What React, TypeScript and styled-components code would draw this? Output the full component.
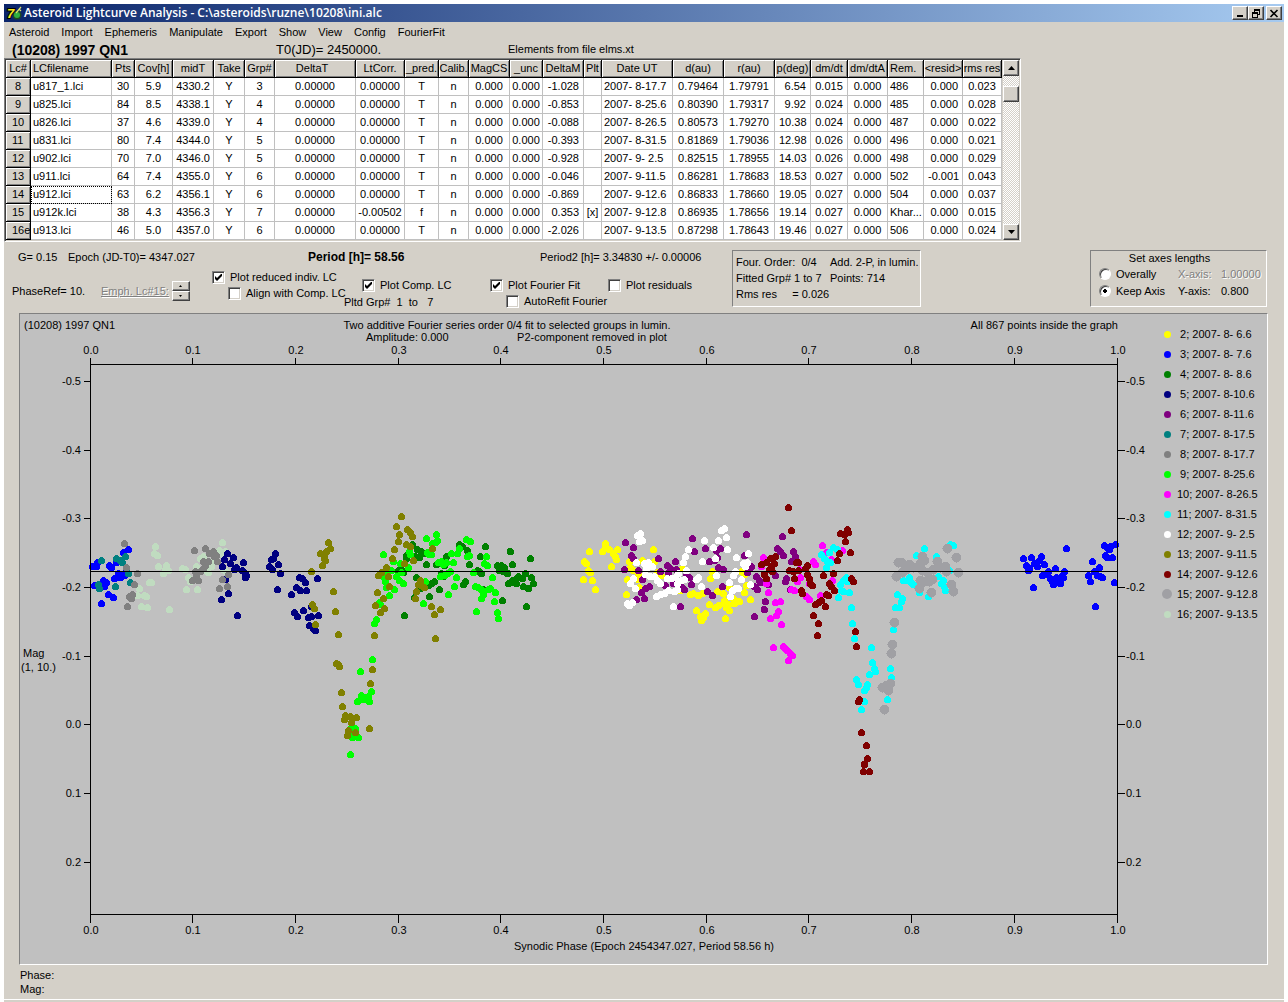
import React, { useState } from "react";
import styled, { createGlobalStyle, css } from "styled-components";

const face = "#d4d0c8";
const uiFont = '"Liberation Sans", Arial, sans-serif';

const GlobalStyle = createGlobalStyle`
  * { box-sizing: border-box; }
  body {
    margin: 0;
    background: #ffffff;
    color: #000000;
    font: 11px/14px ${uiFont};
  }
  button, input { font: inherit; color: inherit; margin: 0; }
`;

const raised = css`
  background: ${face};
  border: 1px solid;
  border-color: #ffffff #404040 #404040 #ffffff;
  box-shadow: inset -1px -1px #808080;
`;

const Window = styled.main`
  margin: 4px 4px 0;
  background: ${face};
`;

const TitleBar = styled.header`
  display: flex;
  align-items: center;
  gap: 2px;
  height: 18px;
  padding: 0 2px;
  background: linear-gradient(to right, #0a246a, #a6caf0);
`;

const Title = styled.h1`
  flex: 1;
  margin: 0;
  color: #ffffff;
  font: 600 12px/18px "Open Sans", "Noto Sans", sans-serif;
  white-space: nowrap;
`;

const Captions = styled.div`
  display: flex;
`;

const CaptionButton = styled.button<{ $apart?: boolean }>`
  ${raised}
  display: grid;
  place-items: center;
  width: 16px;
  height: 14px;
  margin-left: ${(p) => (p.$apart ? 2 : 0)}px;
  padding: 0;
`;

const Menu = styled.nav`
  display: flex;
  gap: 12px;
  height: 20px;
  padding: 0 5px;
`;

const MenuItem = styled.button`
  padding: 0;
  border: 0;
  background: none;
  line-height: 20px;
`;

const InfoRow = styled.div`
  display: grid;
  grid-template-columns: 264px 232px 1fr;
  padding-left: 8px;
  font-size: 13px;
  line-height: 16px;
`;

const Target = styled.strong`
  font-size: 14px;
`;

const Small = styled.span`
  font-size: 11px;
  line-height: 14px;
`;

const GridFrame = styled.section`
  display: flex;
  width: fit-content;
  padding: 1px;
  border: 1px solid;
  border-color: #808080 #ffffff #ffffff #808080;
  box-shadow: inset 1px 1px #404040;
`;

const Table = styled.table`
  width: 996px;
  table-layout: fixed;
  border-collapse: separate;
  border-spacing: 0;
  background: #ffffff;
`;

type Align = "left" | "center" | "right";

const HeadCell = styled.th<{ $align?: Align }>`
  height: 18px;
  padding: 0 0 0 ${(p) => (p.$align === "left" ? 2 : 0)}px;
  overflow: hidden;
  background: ${face};
  border-right: 1px solid #000000;
  border-bottom: 1px solid #000000;
  box-shadow: inset 1px 1px #ffffff, inset -1px -1px #808080;
  font-weight: normal;
  line-height: 17px;
  text-align: ${(p) => p.$align ?? "center"};
  white-space: pre;
  text-overflow: clip;
`;

const RowHead = styled(HeadCell)`
  padding: 0 0 0 6px;
`;

const Cell = styled.td<{ $align: Align; $focus: boolean }>`
  height: 18px;
  padding: 0 ${(p) => (p.$align === "right" ? 4 : 2)}px;
  overflow: hidden;
  border-right: 1px solid #c0c0c0;
  border-bottom: 1px solid #c0c0c0;
  outline: ${(p) => (p.$focus ? "1px dotted #000000" : "none")};
  outline-offset: -1px;
  line-height: 17px;
  text-align: ${(p) => p.$align};
  white-space: pre;
`;

const ScrollBar = styled.div`
  display: flex;
  flex-direction: column;
  width: 16px;
  margin-left: 1px;
  background: repeating-conic-gradient(#ffffff 0 25%, ${face} 0 50%) 0 0 / 2px 2px;
`;

const ScrollButton = styled.button`
  ${raised}
  display: grid;
  place-items: center;
  width: 16px;
  height: 16px;
  padding: 0;
`;

const ScrollThumb = styled.div`
  ${raised}
  height: 16px;
  margin: 10px 0 auto;
`;

const Controls = styled.section`
  display: flex;
  align-items: flex-start;
  padding: 8px 17px 0 0;
`;

const Settings = styled.div`
  flex: 0 0 728px;
`;

const Values = styled.div`
  display: grid;
  grid-template-columns: 50px 240px 232px 1fr;
  padding-left: 14px;
`;

const Period = styled.strong`
  font-size: 12px;
`;

const Options = styled.div`
  display: grid;
  grid-template-columns: 208px 132px 146px 118px 1fr;
  padding-top: 5px;
`;

const Group = styled.div<{ $low?: boolean }>`
  padding-top: ${(p) => (p.$low ? 8 : 0)}px;
`;

const PhaseGroup = styled.div`
  display: flex;
  align-items: center;
  gap: 3px;
  padding-left: 8px;
  height: 44px;
`;

const PhaseRef = styled.span`
  width: 86px;
`;

const Emphasis = styled.span`
  color: #808080;
  text-decoration: underline;
  text-shadow: 1px 1px #ffffff;
`;

const Spinner = styled.span`
  display: flex;
  flex-direction: column;
`;

const SpinButton = styled.button`
  ${raised}
  display: grid;
  place-items: center;
  width: 18px;
  height: 10px;
  padding: 0;
`;

const Check = styled.label<{ $indent?: number }>`
  display: flex;
  align-items: center;
  gap: 5px;
  height: 16px;
  padding-left: ${(p) => p.$indent ?? 0}px;
  white-space: nowrap;
`;

const Box = styled.input`
  appearance: none;
  flex: none;
  width: 13px;
  height: 13px;
  border: 1px solid;
  border-color: #808080 #ffffff #ffffff #808080;
  box-shadow: inset 1px 1px #404040, inset -1px -1px ${face};
  background: #ffffff;

  &:checked {
    background: #ffffff
      url("data:image/svg+xml,%3Csvg xmlns='http://www.w3.org/2000/svg' width='7' height='7'%3E%3Cpath d='M0 2v3l2 2 5-5V-1L2 4z'/%3E%3C/svg%3E")
      center / 7px 7px no-repeat;
  }
`;

const Radio = styled.input`
  appearance: none;
  flex: none;
  width: 12px;
  height: 12px;
  border: 1px solid;
  border-color: #808080 #ffffff #ffffff #808080;
  border-radius: 50%;
  box-shadow: inset 1px 1px #404040;
  background: #ffffff;

  &:checked {
    background: radial-gradient(circle, #000000 2px, #ffffff 2px);
  }
`;

const Spaced = styled.div`
  line-height: 18px;
  white-space: pre;
`;

const Sunken = styled.section`
  height: 57px;
  border: 1px solid;
  border-color: #808080 #ffffff #ffffff #808080;
  white-space: pre;
`;

const FitBox = styled(Sunken)`
  display: grid;
  grid-template-columns: 94px 1fr;
  align-content: start;
  flex: 0 0 189px;
  padding: 3px 0 0 3px;
  line-height: 16px;
`;

const AxesBox = styled(Sunken)`
  flex: 0 0 177px;
  margin-left: auto;
`;

const AxesTitle = styled.h2`
  margin: 0;
  padding-right: 18px;
  font-size: 11px;
  font-weight: normal;
  line-height: 15px;
  text-align: center;
`;

const AxisRow = styled.div`
  display: grid;
  grid-template-columns: 79px 43px 1fr;
  padding-left: 8px;
  line-height: 17px;
`;

const AxisValue = styled.span<{ $off?: boolean }>`
  color: ${(p) => (p.$off ? "#808080" : "#000000")};
  text-shadow: ${(p) => (p.$off ? "1px 1px #ffffff" : "none")};
`;

const Panel = styled.section`
  display: flex;
  margin: 0 16px 0 15px;
  border: 1px solid;
  border-color: #808080 #ffffff #ffffff #808080;
  background: #c0c0c0;
`;

const Chart = styled.svg`
  display: block;
  flex: 1;
  min-width: 0;
  height: auto;
  font: 11px ${uiFont};
`;

const Legend = styled.ul`
  flex: 0 0 115px;
  margin: 0;
  padding: 10px 0 0 10px;
  list-style: none;
`;

const LegendItem = styled.li`
  display: flex;
  align-items: center;
  height: 20px;
  white-space: pre;
`;

const Swatch = styled.span<{ $color: string; $big?: boolean }>`
  flex: none;
  width: ${(p) => (p.$big ? 10 : 7)}px;
  height: ${(p) => (p.$big ? 10 : 7)}px;
  margin: 0 ${(p) => (p.$big ? 5 : 6)}px 0 ${(p) => (p.$big ? 0 : 2)}px;
  border-radius: 50%;
  background: ${(p) => p.$color};
`;

const Status = styled.footer`
  padding: 3px 16px;
`;

const Edge = styled.div`
  height: 3px;
  margin: 0 4px;
  border-top: 1px solid #ffffff;
  background: ${face};
`;

const menu = ["Asteroid", "Import", "Ephemeris", "Manipulate", "Export", "Show", "View", "Config", "FourierFit"];

const columns: { name: string; width: number; head?: Align; align?: Align }[] = [
  { name: "Lc#", width: 25 },
  { name: "LCfilename", width: 81, head: "left", align: "left" },
  { name: "Pts", width: 23 },
  { name: "Cov[h]", width: 38 },
  { name: "midT", width: 41 },
  { name: "Take", width: 31 },
  { name: "Grp#", width: 30 },
  { name: "DeltaT  ", width: 81 },
  { name: "LtCorr.", width: 49 },
  { name: "_pred.", width: 34 },
  { name: "Calib.", width: 30 },
  { name: "MagCS", width: 41 },
  { name: "_unc", width: 33 },
  { name: "DeltaM", width: 41, align: "right" },
  { name: "Plt", width: 18 },
  { name: "Date UT", width: 71, align: "left" },
  { name: "d(au)", width: 51 },
  { name: "r(au)", width: 51 },
  { name: "p(deg)", width: 36, align: "right" },
  { name: "dm/dt", width: 37 },
  { name: "dm/dtA", width: 40 },
  { name: "Rem.", width: 36, head: "left", align: "left" },
  { name: "<resid>", width: 39, align: "right" },
  { name: "rms res", width: 39 },
];

const rows = [
  " 8|u817_1.lci|30|5.9|4330.2|Y|3|0.00000|0.00000|T|n|0.000|0.000|-1.028||2007- 8-17.7|0.79464|1.79791|6.54|0.015|0.000|486|0.000|0.023",
  " 9|u825.lci|84|8.5|4338.1|Y|4|0.00000|0.00000|T|n|0.000|0.000|-0.853||2007- 8-25.6|0.80390|1.79317|9.92|0.024|0.000|485|0.000|0.028",
  "10|u826.lci|37|4.6|4339.0|Y|4|0.00000|0.00000|T|n|0.000|0.000|-0.088||2007- 8-26.5|0.80573|1.79270|10.38|0.024|0.000|487|0.000|0.022",
  "11|u831.lci|80|7.4|4344.0|Y|5|0.00000|0.00000|T|n|0.000|0.000|-0.393||2007- 8-31.5|0.81869|1.79036|12.98|0.026|0.000|496|0.000|0.021",
  "12|u902.lci|70|7.0|4346.0|Y|5|0.00000|0.00000|T|n|0.000|0.000|-0.928||2007- 9- 2.5|0.82515|1.78955|14.03|0.026|0.000|498|0.000|0.029",
  "13|u911.lci|64|7.4|4355.0|Y|6|0.00000|0.00000|T|n|0.000|0.000|-0.046||2007- 9-11.5|0.86281|1.78683|18.53|0.027|0.000|502|-0.001|0.043",
  "14|u912.lci|63|6.2|4356.1|Y|6|0.00000|0.00000|T|n|0.000|0.000|-0.869||2007- 9-12.6|0.86833|1.78660|19.05|0.027|0.000|504|0.000|0.037",
  "15|u912k.lci|38|4.3|4356.3|Y|7|0.00000|-0.00502|f|n|0.000|0.000|0.353|[x]|2007- 9-12.8|0.86935|1.78656|19.14|0.027|0.000|Khar...|0.000|0.015",
  "16e|u913.lci|46|5.0|4357.0|Y|6|0.00000|0.00000|T|n|0.000|0.000|-2.026||2007- 9-13.5|0.87298|1.78643|19.46|0.027|0.000|506|0.000|0.024",
].map((line) => line.split("|"));

type Series = { id: number; date: string; color: string; big?: boolean; points: string };

const series: Series[] = [
  {
    id: 2, date: "2007- 8- 6.6", color: "#ffff00",
    points:
      "589,551 584,561 586,563 588,570 590,572 583,579 592,580 595,589 605,543 605,547 602,551 609,549 617,549 613,553 615,556 616,559 611,566 653,549 629,561 642,560 654,561 630,567 633,570 638,573 627,579 638,579 639,587 626,594 657,572 661,575 682,568 680,590 690,594 693,593 698,595 702,593 710,578 712,571 717,591 723,593 696,610 705,613 700,616 703,617 701,620 709,604 715,607 718,605 723,603 724,600 726,607 729,610 728,604 725,618 734,603 737,601 739,601 733,598 750,599 744,592 746,585 744,574 741,571 729,587 683,562",
  },
  {
    id: 3, date: "2007- 8- 7.6", color: "#0000ff",
    points:
      "92,566 97,562 96,566 94,585 101,603 103,580 106,582 104,586 108,594 113,597 109,565 111,567 116,562 114,578 118,573 120,577 123,552 128,549 124,575 101,583 125,572 1023,558 1026,565 1028,570 1029,568 1031,557 1034,563 1037,566 1039,560 1041,556 1044,564 1033,587 1066,548 1042,575 1045,574 1048,571 1050,578 1053,584 1052,581 1055,568 1056,577 1058,580 1060,583 1061,578 1063,577 1064,571 1062,575 1088,575 1090,581 1092,561 1094,571 1097,575 1099,567 1102,577 1100,576 1095,606 1104,545 1105,555 1109,549 1107,557 1112,557 1110,546 1115,544 1114,582 1107,547",
  },
  {
    id: 4, date: "2007- 8- 8.6", color: "#008000",
    points:
      "412,544 417,549 421,551 424,553 419,557 406,555 406,558 415,556 426,564 436,564 438,563 446,556 459,544 462,546 467,550 469,564 485,546 480,556 510,551 530,558 512,564 497,565 501,565 504,567 499,570 503,571 507,573 502,568 477,570 481,573 479,571 525,573 518,576 522,578 515,579 512,580 508,583 516,583 513,582 531,577 533,583 523,586 528,588 526,606 502,600 483,589 465,581 463,584 434,581 431,583 428,585 439,589 429,596 416,577 420,588 414,597 404,615 398,570 401,569 403,572 441,573 443,576 444,565",
  },
  {
    id: 5, date: "2007- 8-10.6", color: "#000080",
    points:
      "227,553 224,559 222,566 233,557 230,563 243,562 234,569 236,567 242,570 245,573 246,575 245,577 225,579 228,593 221,599 237,615 275,553 273,558 271,559 278,564 269,566 272,569 280,573 277,589 291,594 296,587 300,590 306,590 305,582 299,577 302,578 317,578 294,612 297,616 303,610 308,617 311,616 318,615 309,625 315,630 313,628 311,606",
  },
  {
    id: 6, date: "2007- 8-11.6", color: "#800080",
    points:
      "625,542 633,547 631,555 633,558 624,569 638,570 658,558 642,579 649,586 645,588 641,592 636,599 644,598 667,565 675,561 670,568 676,569 668,572 660,571 673,583 665,585 680,606 692,538 694,551 705,548 720,548 716,550 709,561 717,557 714,560 718,567 723,569 722,586 686,575 689,577 691,584 681,586 684,589 707,591 712,595 746,534 744,555 751,566 749,568 747,572 756,576 759,580 760,582 754,586 757,589 765,601 764,609 754,616 782,536 777,548 780,551 783,555 793,551 795,556 791,561 775,575 786,578 785,581 768,584 790,589",
  },
  {
    id: 7, date: "2007- 8-17.5", color: "#008080",
    points: "101,560 116,558 125,556 122,562 120,560 128,573 130,582 115,586 98,584 99,588",
  },
  {
    id: 8, date: "2007- 8-17.7", color: "#808080",
    points:
      "124,543 126,567 137,573 134,584 127,606 132,594 129,596 131,598 194,550 205,548 213,551 209,553 216,555 217,561 203,561 208,561 205,565 203,568 200,571 195,571 192,580 198,580 196,576 228,574 222,579 227,586 219,588 214,556",
  },
  {
    id: 9, date: "2007- 8-25.6", color: "#00ff00",
    points:
      "383,554 426,538 436,534 437,540 432,543 435,542 409,551 410,554 429,554 427,552 431,554 451,553 457,553 459,548 466,539 470,541 467,556 469,555 486,556 484,563 487,565 453,562 393,561 400,563 408,567 391,570 387,574 384,577 385,581 386,587 394,589 389,595 396,576 399,580 403,583 401,572 438,562 441,561 443,564 446,562 440,576 444,575 447,573 450,571 456,577 454,586 448,594 473,572 475,586 478,587 481,589 483,594 481,598 492,577 490,588 488,589 495,592 494,601 476,611 497,612 498,618 425,581 423,603 379,602 380,604 376,619 374,623 372,659 360,671 371,691 361,695 364,697 368,696 357,701 363,699 369,701 366,699 350,754 355,728 350,728 352,737 358,737 354,733",
  },
  {
    id: 10, date: "2007- 8-26.5", color: "#ff00ff",
    points:
      "763,557 761,566 766,583 768,592 775,602 780,601 778,611 776,615 770,618 781,624 773,647 783,646 785,648 787,650 790,653 792,655 788,660 822,545 826,552 842,550 813,561 815,564 831,559 800,577 797,581 791,589 794,590 799,569 809,583 806,596 809,599 820,595 832,580 828,595",
  },
  {
    id: 11, date: "2007- 8-31.5", color: "#00ffff",
    points:
      "833,547 837,549 829,552 821,554 824,558 827,561 830,562 826,567 846,577 843,580 840,584 847,581 841,590 843,591 849,592 838,597 851,607 852,623 854,638 871,647 872,662 874,668 875,671 869,674 856,679 858,684 867,684 866,687 864,690 864,701 861,709 887,699 891,677 890,668 893,629 895,607 899,607 902,598 901,601 897,594 903,580 907,580 911,582 913,584 909,577 916,555 924,548 936,556 950,544 953,545 928,596 919,592 941,583 944,586 945,590 943,580 938,576 949,570",
  },
  {
    id: 12, date: "2007- 9- 2.5", color: "#ffffff",
    points:
      "640,533 637,535 639,541 642,540 636,562 644,563 648,562 652,566 646,568 645,574 650,576 654,576 657,580 660,583 633,578 630,583 635,588 627,603 632,602 629,605 656,596 660,594 664,593 668,590 674,591 677,589 667,578 671,578 675,577 678,573 681,580 677,583 684,579 686,570 683,562 685,556 688,549 673,606 698,577 696,579 701,586 702,561 704,540 713,547 715,558 718,540 721,530 724,528 726,537 727,549 716,575 729,582 732,590 730,596 738,588 735,588 733,575 735,571 741,579 750,584 736,557 743,563 747,562 748,553 745,566",
  },
  {
    id: 13, date: "2007- 9-11.5", color: "#808000",
    points:
      "328,542 330,548 320,553 324,554 326,551 325,560 322,565 324,558 311,571 333,591 312,604 314,608 315,624 335,611 338,634 336,663 339,666 338,664 341,692 342,706 345,715 344,719 350,716 356,717 351,722 348,730 347,735 355,732 369,728 370,683 372,669 374,635 380,612 384,608 375,605 383,598 377,592 389,586 388,576 378,575 381,572 386,567 392,558 394,549 398,541 399,534 396,526 401,516 407,529 410,532 412,536 406,544 410,546 413,560 404,563 432,548 420,580 418,584 424,587 421,585 416,591 415,598 431,606 440,609 434,614 435,638",
  },
  {
    id: 14, date: "2007- 9-12.6", color: "#800000",
    points:
      "788,507 791,530 775,556 770,558 766,562 761,564 774,563 771,566 769,569 772,571 764,574 766,578 798,562 796,562 807,565 805,568 789,570 793,571 798,570 794,578 807,574 809,578 810,583 812,585 801,590 802,593 823,575 833,573 829,583 831,586 834,590 826,594 828,595 821,600 815,604 818,602 825,606 813,615 818,623 817,635 847,529 840,533 848,532 844,534 845,541 850,552 839,553 837,560 851,578 853,581 855,631 856,646 859,699 858,701 861,732 866,745 867,758 864,764 863,771 869,771",
  },
  {
    id: 15, date: "2007- 9-12.8", color: "#a0a0a4", big: true,
    points:
      "947,548 956,557 958,572 951,584 953,591 931,592 919,588 896,576 898,562 901,562 909,564 906,569 913,567 922,556 924,560 920,563 937,561 940,567 945,566 946,571 933,569 927,572 922,570 920,580 924,581 929,581 932,579 894,622 892,644 891,653 890,683 886,685 882,687 888,690 884,709 902,572",
  },
  {
    id: 16, date: "2007- 9-13.5", color: "#c0dcc0",
    points:
      "155,546 154,553 157,555 158,566 166,565 168,570 163,573 165,569 151,582 149,582 139,588 137,595 144,595 146,596 141,606 147,607 169,609 182,568 185,569 188,577 190,581 186,589 197,589 200,558 203,556 196,566 208,572 211,566 212,562 222,542 219,550 225,551 223,554 223,569 226,571 206,570",
  },
];

/* The last night is plotted beneath the others. */
const plotOrder = [...series.slice(-1), ...series.slice(0, -1)];

const phaseTicks = Array.from({ length: 11 }, (_, i) => ({ x: Math.floor(90 + i * 102.7), label: (i / 10).toFixed(1) }));
const magTicks = [-0.5, -0.4, -0.3, -0.2, -0.1, 0, 0.1, 0.2].map((m) => ({
  y: Math.round(724.4 + m * 687),
  label: m.toFixed(1),
}));

function LightCurve() {
  return (
    <Chart viewBox="20 314 1132 650" role="img" aria-label="Composite lightcurve">
      <g shapeRendering="crispEdges" transform="translate(0.5 0.5)">
        {plotOrder.map((s) => (
          <g key={s.id} fill={s.color}>
            {s.points.split(" ").map((p, i) => {
              const [x, y] = p.split(",");
              return <circle key={i} cx={x} cy={y} r={s.big ? 5 : 3.5} />;
            })}
          </g>
        ))}
        <g stroke="#000000" fill="none">
          <path d="M90 571H1117M90 364H1117V914H90Z" />
          {phaseTicks.map((t) => (
            <path key={t.label} d={`M${t.x} 357V364M${t.x} 914V922`} />
          ))}
          {magTicks.map((t) => (
            <path key={t.label} d={`M83 ${t.y}H90M1117 ${t.y}H1124`} />
          ))}
        </g>
      </g>
      {phaseTicks.map((t) => (
        <g key={t.label} textAnchor="middle">
          <text x={t.x + 1} y={354}>{t.label}</text>
          <text x={t.x + 1} y={934}>{t.label}</text>
        </g>
      ))}
      {magTicks.map((t) => (
        <g key={t.label}>
          <text x={81} y={t.y + 4} textAnchor="end">{t.label}</text>
          <text x={1126} y={t.y + 4}>{t.label}</text>
        </g>
      ))}
      <text x={24} y={329}>(10208) 1997 QN1</text>
      <text x={507} y={329} textAnchor="middle">Two additive Fourier series order 0/4 fit to selected groups in lumin.</text>
      <text x={366} y={341}>Amplitude: 0.000</text>
      <text x={592} y={341} textAnchor="middle">P2-component removed in plot</text>
      <text x={1118} y={329} textAnchor="end">All 867 points inside the graph</text>
      <text x={23} y={657}>Mag</text>
      <text x={21} y={671}>(1, 10.)</text>
      <text x={644} y={950} textAnchor="middle">Synodic Phase (Epoch 2454347.027, Period 58.56 h)</text>
    </Chart>
  );
}

function AppIcon() {
  return (
    <svg width="16" height="16" viewBox="0 0 16 16" aria-hidden="true">
      <circle cx="11" cy="10" r="4.5" fill="#204820" />
      <circle cx="11" cy="10" r="3" fill="#30b040" />
      <path d="M10 8l5-6M13 4l2 2" stroke="#d8e070" strokeWidth="1.2" />
      <text
        x="1" y="13" fill="#f8e820" stroke="#000000" strokeWidth="2" paintOrder="stroke"
        fontFamily="Liberation Sans" fontWeight="bold" fontStyle="italic" fontSize="13"
      >
        7
      </text>
    </svg>
  );
}

function Triangle({ size, down }: { size: number; down?: boolean }) {
  const w = size * 2 - 1;
  return (
    <svg width={w} height={size} viewBox={`0 0 ${w} ${size}`} aria-hidden="true">
      <path d={down ? `M0 0H${w}L${w / 2} ${size}Z` : `M0 ${size}H${w}L${w / 2} 0Z`} />
    </svg>
  );
}

function Option({ label, on, indent }: { label: string; on?: boolean; indent?: number }) {
  return (
    <Check $indent={indent}>
      <Box type="checkbox" defaultChecked={on} />
      {label}
    </Check>
  );
}

export default function App() {
  const [axis, setAxis] = useState("keep");
  return (
    <>
      <GlobalStyle />
      <Window>
        <TitleBar>
          <AppIcon />
          <Title>Asteroid Lightcurve Analysis - C:\asteroids\ruzne\10208\ini.alc</Title>
          <Captions>
            <CaptionButton aria-label="Minimize">
              <svg width="10" height="9"><path d="M2 6h6v2H2z" /></svg>
            </CaptionButton>
            <CaptionButton aria-label="Restore">
              <svg width="10" height="9" fill="none" stroke="#000000" shapeRendering="crispEdges">
                <path d="M3.5 3V.5h5v5H6.5M3 1.5h6M1.5 3.5h5v5h-5zM1 4.5h6" />
              </svg>
            </CaptionButton>
            <CaptionButton aria-label="Close" $apart>
              <svg width="10" height="9"><path d="M1.5 1l7 7M8.5 1l-7 7" stroke="#000000" strokeWidth="1.6" /></svg>
            </CaptionButton>
          </Captions>
        </TitleBar>

        <Menu>
          {menu.map((m) => (
            <MenuItem key={m}>{m}</MenuItem>
          ))}
        </Menu>

        <InfoRow>
          <Target>(10208) 1997 QN1</Target>
          <span>T0(JD)= 2450000.</span>
          <Small>Elements from file elms.xt</Small>
        </InfoRow>

        <GridFrame>
          <Table>
            <colgroup>
              {columns.map((c) => (
                <col key={c.name} width={c.width} />
              ))}
            </colgroup>
            <thead>
              <tr>
                {columns.map((c) => (
                  <HeadCell key={c.name} scope="col" $align={c.head}>{c.name}</HeadCell>
                ))}
              </tr>
            </thead>
            <tbody>
              {rows.map(([id, ...cells]) => (
                <tr key={id}>
                  <RowHead scope="row" $align="left">{id}</RowHead>
                  {cells.map((value, i) => (
                    <Cell key={i} $align={columns[i + 1].align ?? "center"} $focus={id === "14" && i === 0}>
                      {value}
                    </Cell>
                  ))}
                </tr>
              ))}
            </tbody>
          </Table>
          <ScrollBar>
            <ScrollButton aria-label="Scroll up"><Triangle size={4} /></ScrollButton>
            <ScrollThumb />
            <ScrollButton aria-label="Scroll down"><Triangle size={4} down /></ScrollButton>
          </ScrollBar>
        </GridFrame>

        <Controls>
          <Settings>
            <Values>
              <span>G= 0.15</span>
              <span>Epoch (JD-T0)= 4347.027</span>
              <Period>Period [h]= 58.56</Period>
              <span>Period2 [h]= 3.34830 +/- 0.00006</span>
            </Values>
            <Options>
              <PhaseGroup>
                <PhaseRef>PhaseRef= 10.</PhaseRef>
                <Emphasis>Emph. Lc#15:</Emphasis>
                <Spinner>
                  <SpinButton aria-label="Next lightcurve"><Triangle size={2} /></SpinButton>
                  <SpinButton aria-label="Previous lightcurve"><Triangle size={2} down /></SpinButton>
                </Spinner>
              </PhaseGroup>
              <Group>
                <Option label="Plot reduced indiv. LC" on />
                <Option label="Align with Comp. LC" indent={16} />
              </Group>
              <Group $low>
                <Option label="Plot Comp. LC" on indent={18} />
                <Spaced>Pltd Grp#  1  to   7</Spaced>
              </Group>
              <Group $low>
                <Option label="Plot Fourier Fit" on />
                <Option label="AutoRefit Fourier" indent={16} />
              </Group>
              <Group $low>
                <Option label="Plot residuals" />
              </Group>
            </Options>
          </Settings>
          <FitBox>
            <span>Four. Order:  0/4</span>
            <span>Add. 2-P, in lumin.</span>
            <span>Fitted Grp# 1 to 7</span>
            <span>Points: 714</span>
            <span>Rms res     = 0.026</span>
          </FitBox>
          <AxesBox>
            <AxesTitle>Set axes lengths</AxesTitle>
            <AxisRow>
              <Check>
                <Radio type="radio" name="axes" checked={axis === "overall"} onChange={() => setAxis("overall")} />
                Overally
              </Check>
              <AxisValue $off>X-axis:</AxisValue>
              <AxisValue $off>1.00000</AxisValue>
            </AxisRow>
            <AxisRow>
              <Check>
                <Radio type="radio" name="axes" checked={axis === "keep"} onChange={() => setAxis("keep")} />
                Keep Axis
              </Check>
              <AxisValue>Y-axis:</AxisValue>
              <AxisValue>0.800</AxisValue>
            </AxisRow>
          </AxesBox>
        </Controls>

        <Panel>
          <LightCurve />
          <Legend>
            {series.map((s) => (
              <LegendItem key={s.id}>
                <Swatch $color={s.color} $big={s.big} />
                {`${s.id < 10 ? " " : ""}${s.id}; ${s.date}`}
              </LegendItem>
            ))}
          </Legend>
        </Panel>

        <Status>
          <div>Phase:</div>
          <div>Mag:</div>
        </Status>
      </Window>
      <Edge />
    </>
  );
}
